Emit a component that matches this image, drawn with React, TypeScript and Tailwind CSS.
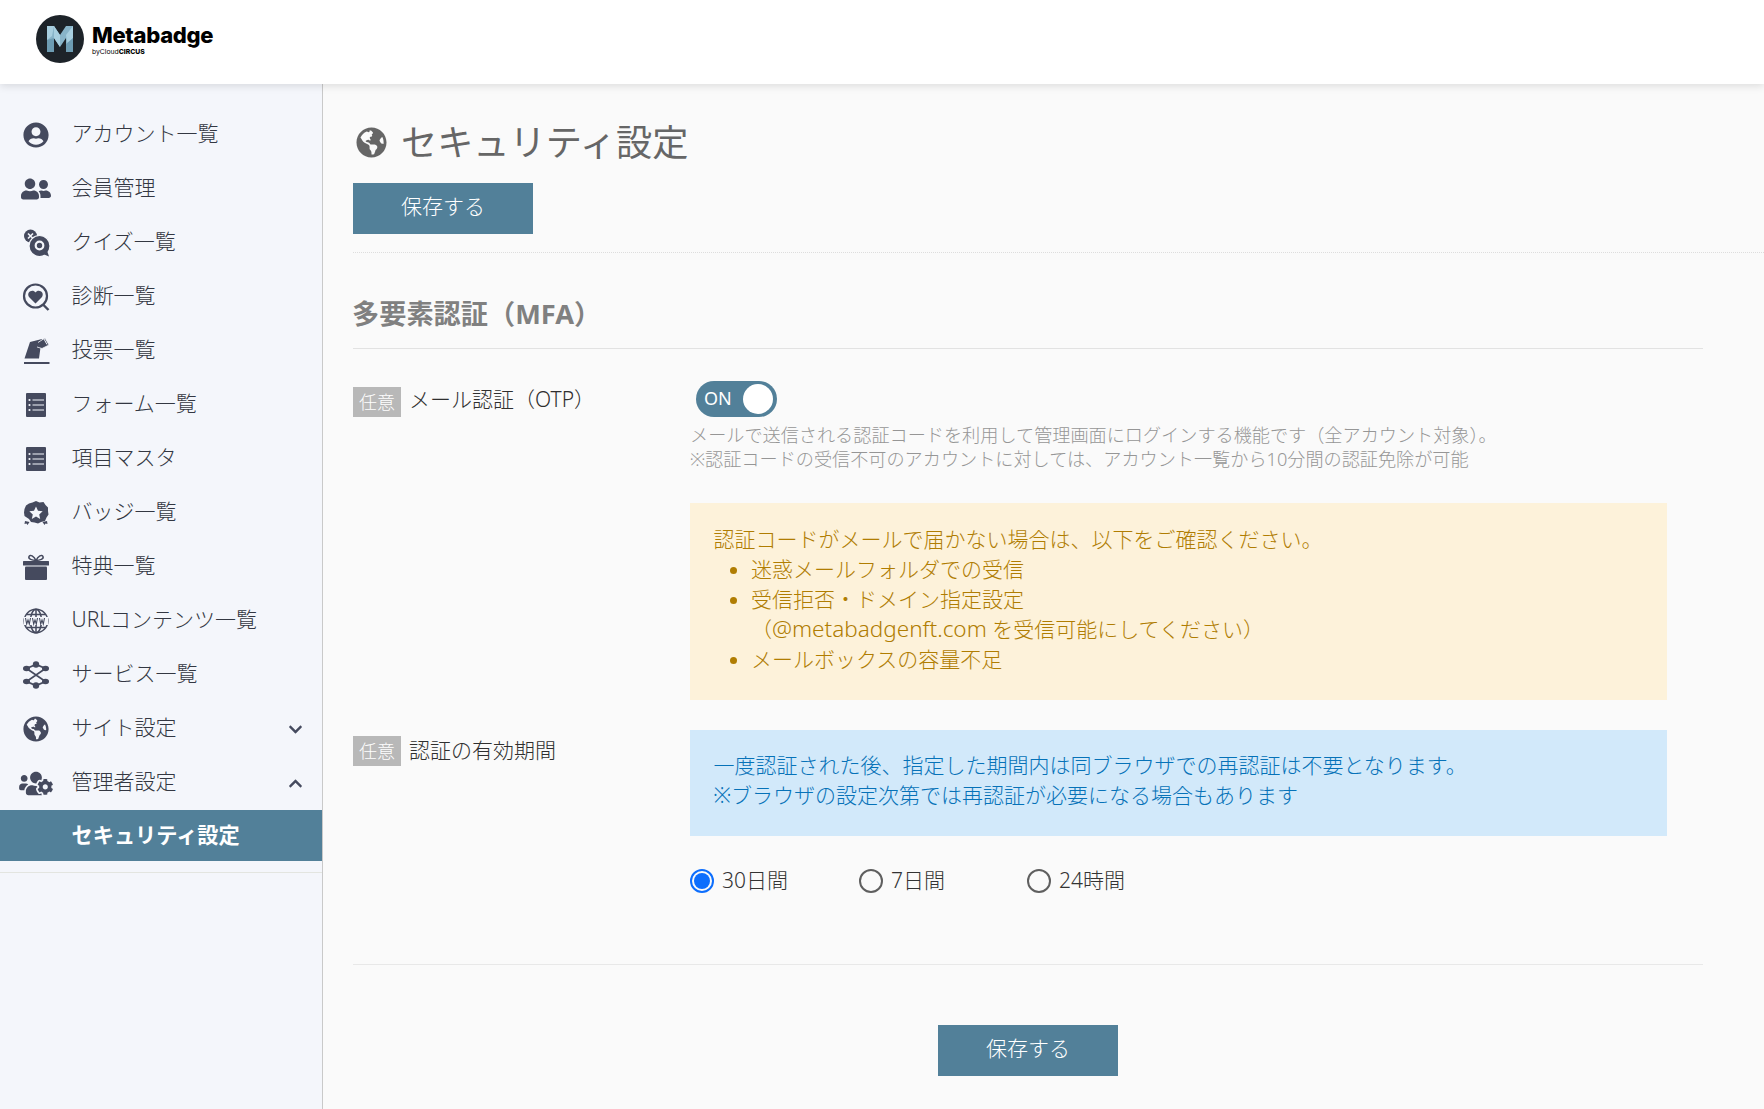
import { FaChevronDown, FaChevronUp, FaGlobeAmericas, FaUserCircle, FaUserFriends, FaUsersCog } from "react-icons/fa";

function QuizIcon() {
  return (
    <svg viewBox="0 0 27 28" className="w-[27px] h-[28px]" fill="#454a5e">
      <circle cx="7.500" cy="7" r="6.500" />
      <path d="M5 4.500l5 5M10 4.500l-5 5" stroke="#f4f6fb" strokeWidth="1.600" />
      <circle cx="16.500" cy="17" r="10.500" stroke="#f4f6fb" strokeWidth="1.200" />
      <path d="M20 25l6 2.500-2-6z" />
      <circle cx="16.500" cy="16.500" r="3.800" fill="none" stroke="#f4f6fb" strokeWidth="2.200" />
    </svg>
  );
}

function DiagnoseIcon() {
  return (
    <svg viewBox="0 0 28 28" className="w-[28px] h-[28px]">
      <circle cx="13.500" cy="13" r="11.500" fill="none" stroke="#454a5e" strokeWidth="2.200" />
      <path d="M21 21.500l5.500 5.500" stroke="#454a5e" strokeWidth="2.400" />
      <path d="M13.500 20.500l-6.500-6.500c-3-4.500 3.500-8.500 6.500-4.500 3-4 9.500 0 6.500 4.500z" fill="#454a5e" />
    </svg>
  );
}

function VoteIcon() {
  return (
    <svg viewBox="0 0 27 28" className="w-[27px] h-[28px]" fill="#454a5e">
      <path d="M7 5l12-3-1 6-4 1.500 3.500 1-1.500 11H1.500z" />
      <path d="M15 5.500l7-4.500 4 7-7 3.500-5-1.500" fill="#454a5e" stroke="#f4f6fb" strokeWidth="0.800" />
      <path d="M21 2l3 5.500" stroke="#f4f6fb" strokeWidth="1" />
      <rect x="1" y="25" width="25.500" height="2" />
    </svg>
  );
}

function ListIcon() {
  return (
    <svg viewBox="0 0 20 24" className="w-[20px] h-[24px]">
      <rect width="20" height="24" rx="1" fill="#454a5e" />
      <circle cx="3.500" cy="7" r="1.100" fill="#f4f6fb" />
      <circle cx="3.500" cy="12" r="1.100" fill="#f4f6fb" />
      <circle cx="3.500" cy="17" r="1.100" fill="#f4f6fb" />
      <path d="M6.500 7H18M6.500 12H18M6.500 17H18" stroke="#f4f6fb" strokeWidth="1.200" />
    </svg>
  );
}

function BadgeIcon() {
  return (
    <svg viewBox="0 0 26 26" className="w-[26px] h-[26px]">
      <path d="M13 1l3.500 1.500 4-.5 2 3 2.500 2.500v3.500l.500 3.500-2 3-1.500 3.500-4 1-3 1.500-3.500-1-3.500-.500-2-3L1.500 16 1 12.500 1.500 9 3 5.500 6 3.500l3.500-1z" fill="#454a5e" />
      <path d="M13 6.500l2 4.300 4.700.500-3.500 3.100 1 4.600-4.200-2.400-4.200 2.400 1-4.600-3.500-3.100 4.700-.500z" fill="#f4f6fb" />
      <path d="M2 21l4.500 1-2 3-1-1.500-2 .500zM24 21l-4.500 1 2 3 1-1.500 2 .500z" fill="#454a5e" />
    </svg>
  );
}

function GiftIcon() {
  return (
    <svg viewBox="0 0 26 26" className="w-[26px] h-[26px]">
      <path d="M13 6.500C11 2 7 0 6 2.500S9 6.500 13 6.500zM13 6.500c2-4.500 6-6.500 7-4S17 6.500 13 6.500z" fill="none" stroke="#454a5e" strokeWidth="1.500" />
      <rect y="7" width="26" height="4.500" rx="0.500" fill="#454a5e" />
      <rect x="2" y="12.500" width="22" height="13.500" rx="1" fill="#454a5e" />
    </svg>
  );
}

function WwwIcon() {
  return (
    <svg viewBox="0 0 26 26" className="w-[26px] h-[26px]" fill="none" stroke="#454a5e" strokeWidth="1.500">
      <circle cx="13" cy="13" r="11.800" />
      <ellipse cx="13" cy="13" rx="5.500" ry="11.800" />
      <path d="M13 1v24M3.500 6.500h19M3.500 19.500h19" />
      <rect x="1" y="9" width="24" height="8" fill="#f4f6fb" stroke="none" />
      <path d="M2.500 10l1.200 6 1.300-4 1.300 4L7.500 10M9.500 10l1.200 6 1.300-4 1.300 4 1.200-6M16.500 10l1.200 6 1.300-4 1.300 4 1.200-6" strokeWidth="1.100" />
    </svg>
  );
}

function ServiceIcon() {
  return (
    <svg viewBox="0 0 26 28" className="w-[26px] h-[28px]" fill="#454a5e" stroke="none">
      <path d="M13 3.500L3.500 7.500 22.500 20.500 13 24.500 3.500 20.500 22.500 7.500z" fill="none" stroke="#454a5e" strokeWidth="1.800" />
      <circle cx="13" cy="3.500" r="3.200" />
      <ellipse cx="3.500" cy="7.500" rx="3.500" ry="2.800" />
      <ellipse cx="22.500" cy="7.500" rx="3.500" ry="2.800" />
      <ellipse cx="3.500" cy="20.500" rx="3.500" ry="2.800" />
      <ellipse cx="22.500" cy="20.500" rx="3.500" ry="2.800" />
      <circle cx="13" cy="24.500" r="3.200" />
    </svg>
  );
}

function LogoMark() {
  return (
    <svg viewBox="0 0 48 48" className="w-[48px] h-[48px] shrink-0">
      <circle cx="24" cy="24" r="24" fill="#1d2329" />
      <path d="M11 11h7l6 9 6-9h7v26h-7V23l-6 9-6-9v14h-7z" fill="#88b4c9" />
      <path d="M11 11h7l-2 10-5 4zM30 20l7-9v12l-5 8zM18 11l6 9v12l-6-9z" fill="#a8cfe0" />
      <path d="M30 37v-8l7-6v14zM11 37V25l7-2v14z" fill="#6d9cb3" />
    </svg>
  );
}

const navItems = [
  { label: "アカウント一覧", icon: <FaUserCircle className="w-[26px] h-[26px]" /> },
  { label: "会員管理", icon: <FaUserFriends className="w-[30px] h-[24px]" /> },
  { label: "クイズ一覧", icon: <QuizIcon /> },
  { label: "診断一覧", icon: <DiagnoseIcon /> },
  { label: "投票一覧", icon: <VoteIcon /> },
  { label: "フォーム一覧", icon: <ListIcon /> },
  { label: "項目マスタ", icon: <ListIcon /> },
  { label: "バッジ一覧", icon: <BadgeIcon /> },
  { label: "特典一覧", icon: <GiftIcon /> },
  { label: "URLコンテンツ一覧", icon: <WwwIcon /> },
  { label: "サービス一覧", icon: <ServiceIcon /> },
];

function NavRow({ label, icon, chevron }: { label: string; icon: React.ReactNode; chevron?: React.ReactNode }) {
  return (
    <div className="h-[54px] flex items-center text-[#333742]">
      <div className="w-[72px] flex justify-center shrink-0 text-[#454a5e]">{icon}</div>
      <span className="text-[21px] flex-1 pb-[2px] -ml-[0.5px]">{label}</span>
      {chevron && <div className="w-[13px] mr-[21px] text-[#454a5e]">{chevron}</div>}
    </div>
  );
}

function SaveButton() {
  return (
    <button className="w-[180px] h-[51px] pb-[4px] bg-[#528099] text-white text-[21px]">保存する</button>
  );
}

function Badge() {
  return (
    <span className="w-[48px] h-[30px] mt-[1px] bg-[#b8b8b8] text-white text-[18px] flex items-center justify-center shrink-0">任意</span>
  );
}

function Radio({ label, checked, width }: { label: string; checked?: boolean; width: string }) {
  return (
    <label className={`flex items-center gap-[8px] ${width}`}>
      <span className={`w-[24px] h-[24px] rounded-full border-2 flex items-center justify-center ${checked ? "border-[#0d6efd]" : "border-[#5f5f5f]"}`}>
        {checked && <span className="w-[16px] h-[16px] rounded-full bg-[#0d6efd]" />}
      </span>
      <span className="text-[21px] text-[#333333]">{label}</span>
    </label>
  );
}

export default function App() {
  return (
    <div className="h-[1109px] overflow-hidden flex flex-col bg-[#fafafa] font-light font-['Noto_Sans','Noto_Sans_CJK_JP',sans-serif]">
      {/* Header */}
      <header className="h-[84px] shrink-0 bg-white flex items-center pl-[36px] pb-[6px] gap-[8px] relative z-10 shadow-[0_2px_8px_rgba(0,0,0,0.12)]">
        <LogoMark />
        <div className="flex flex-col">
          <span className="font-['Inter',sans-serif] font-extrabold text-[22px] leading-[25px] text-black tracking-[-0.3px]">Metabadge</span>
          <span className="font-['Inter',sans-serif] text-[6.800px] leading-[8px] text-black font-normal">
            byCloud<span className="font-extrabold">CIRCUS</span>
          </span>
        </div>
      </header>

      <div className="flex flex-1 min-h-0">
        {/* Sidebar */}
        <aside className="w-[323px] shrink-0 bg-[#f4f6fb] border-r border-[#c9c9c9] pt-[24px]">
          {navItems.map((item) => (
            <NavRow key={item.label} label={item.label} icon={item.icon} />
          ))}
          <NavRow
            label="サイト設定"
            icon={<FaGlobeAmericas className="w-[26px] h-[26px]" />}
            chevron={<FaChevronDown className="w-[15px] h-[15px]" />}
          />
          <NavRow
            label="管理者設定"
            icon={<FaUsersCog className="w-[34px] h-[27px]" />}
            chevron={<FaChevronUp className="w-[15px] h-[15px]" />}
          />
          <div className="h-[51px] pb-[2px] bg-[#528099] text-white font-bold text-[21.200px] flex items-center pl-[71.5px]">
            セキュリティ設定
          </div>
          <div className="mt-[11px] border-t border-[#e3e5e0]" />
        </aside>

        {/* Main */}
        <main className="flex-1 min-w-0 pl-[30px]">
          <div className="pt-[34px] pb-[18px] border-b border-dotted border-[#dddddd]">
            <h1 className="flex items-center gap-[14px] h-[48px] text-[36.200px] text-[#666666] font-normal">
              <FaGlobeAmericas className="w-[31px] h-[31px] ml-[3px]" />
              セキュリティ設定
            </h1>
            <div className="mt-[17px]">
              <SaveButton />
            </div>
          </div>

          <div className="w-[1350px]">
            <h2 className="mt-[41px] pb-[14px] text-[27.200px] leading-[40px] -indent-[1px] font-bold text-[#808080] border-b border-[#e2e2e2]">
              多要素認証（MFA）
            </h2>

            {/* OTP row */}
            <div className="flex mt-[37px]">
              <div className="w-[337px] flex gap-[8px] shrink-0 text-[21px] text-[#2f2f2f]">
                <Badge />
                <span className="leading-[27px]">メール認証（OTP）</span>
              </div>
              <div className="w-[977px]">
                <div className="-mt-[5px] ml-[6px] w-[81px] h-[36px] pb-[2px] rounded-full bg-[#528099] relative text-white text-[18px] font-normal flex items-center pl-[8px]">
                  ON
                  <span className="absolute right-[4px] top-[3px] w-[30px] h-[30px] rounded-full bg-white" />
                </div>
                <p className="mt-[6px] text-[18.150px] leading-[24px] text-[#969696]">
                  メールで送信される認証コードを利用して管理画面にログインする機能です（全アカウント対象）。
                  <br />
                  ※認証コードの受信不可のアカウントに対しては、アカウント一覧から10分間の認証免除が可能
                </p>
                <div className="mt-[32px] h-[197px] bg-[#fdf2da] text-[#b07d02] text-[21px] leading-[30px] pl-[23.5px] pr-[24px] pt-[21px]">
                  <p>認証コードがメールで届かない場合は、以下をご確認ください。</p>
                  <ul className="list-disc pl-[37.500px]">
                    <li>迷惑メールフォルダでの受信</li>
                    <li>
                      受信拒否・ドメイン指定設定
                      <br />
                      （<span className="text-[22.500px]">@metabadgenft.com</span> を受信可能にしてください）
                    </li>
                    <li>メールボックスの容量不足</li>
                  </ul>
                </div>
              </div>
            </div>

            {/* Validity row */}
            <div className="flex mt-[30px] pb-[68px] border-b border-[#e8e8e8]">
              <div className="w-[337px] pt-[5px] flex gap-[8px] shrink-0 text-[21px] text-[#2f2f2f]">
                <Badge />
                <span className="leading-[30px]">認証の有効期間</span>
              </div>
              <div className="w-[977px]">
                <div className="h-[106px] bg-[#d2e9fa] text-[#0672b8] text-[21px] leading-[30px] pl-[23.5px] pr-[24px] pt-[20px]">
                  一度認証された後、指定した期間内は同ブラウザでの再認証は不要となります。
                  <br />
                  ※ブラウザの設定次第では再認証が必要になる場合もあります
                </div>
                <div className="flex mt-[30px] h-[30px]">
                  <Radio label="30日間" checked width="w-[169px]" />
                  <Radio label="7日間" width="w-[168px]" />
                  <Radio label="24時間" width="w-[168px]" />
                </div>
              </div>
            </div>

            <div className="flex justify-center mt-[60px]">
              <SaveButton />
            </div>
          </div>
        </main>
      </div>
    </div>
  );
}
